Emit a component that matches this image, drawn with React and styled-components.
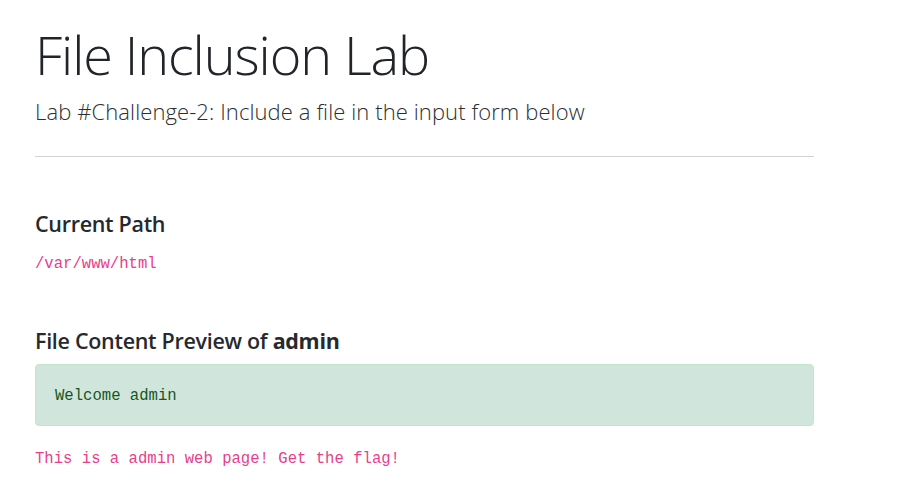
import React from 'react';
import styled, { createGlobalStyle } from 'styled-components';

const GlobalStyle = createGlobalStyle`
  body {
    margin: 0;
    background: #fff;
    color: #212529;
    font-family: "Open Sans", "Noto Sans", sans-serif;
  }
`;

const Container = styled.div`
  width: 779px;
  padding: 22px 0 0 35px;
`;

const Title = styled.h1`
  margin: 0;
  font-size: 54px;
  font-weight: 300;
  letter-spacing: -1.1px;
  line-height: 1.2;
`;

const Lead = styled.p`
  margin: 8px 0 0;
  font-size: 22px;
  font-weight: 300;
  letter-spacing: 0.1px;
  line-height: 1.5;
  color: #2b2f33;
`;

const Rule = styled.hr`
  margin: 28px 0 0;
  border: 0;
  border-top: 1px solid #d3d3d3;
`;

const SectionTitle = styled.h5`
  margin: ${props => props.gap}px 0 0;
  font-size: 21.5px;
  font-weight: 600;
  letter-spacing: -0.3px;
  line-height: 1.2;
  color: #262a2e;

  b {
    font-weight: 700;
  }
`;

const Code = styled.div`
  margin-top: ${props => props.gap}px;
  font-family: "Liberation Mono", monospace;
  font-size: 15.6px;
  line-height: 1.5;
  color: #e83e8c;
`;

const Alert = styled.div`
  margin-top: 10px;
  padding: 20px 19px 17px;
  border: 1px solid #c3e6cb;
  border-radius: 4px;
  background: #d0e6dc;
  color: #155724;
  font-family: "Liberation Mono", monospace;
  font-size: 15.6px;
  line-height: 1.5;
`;

export default function App() {
  return (
    <>
      <GlobalStyle />
      <Container>
        <Title>File Inclusion Lab</Title>
        <Lead>Lab #Challenge-2: Include a file in the input form below</Lead>
        <Rule />
        <SectionTitle gap={54}>Current Path</SectionTitle>
        <Code gap={16}>/var/www/html</Code>
        <SectionTitle gap={52}>
          File Content Preview of <b>admin</b>
        </SectionTitle>
        <Alert>Welcome admin</Alert>
        <Code gap={22}>This is a admin web page! Get the flag!</Code>
      </Container>
    </>
  );
}
